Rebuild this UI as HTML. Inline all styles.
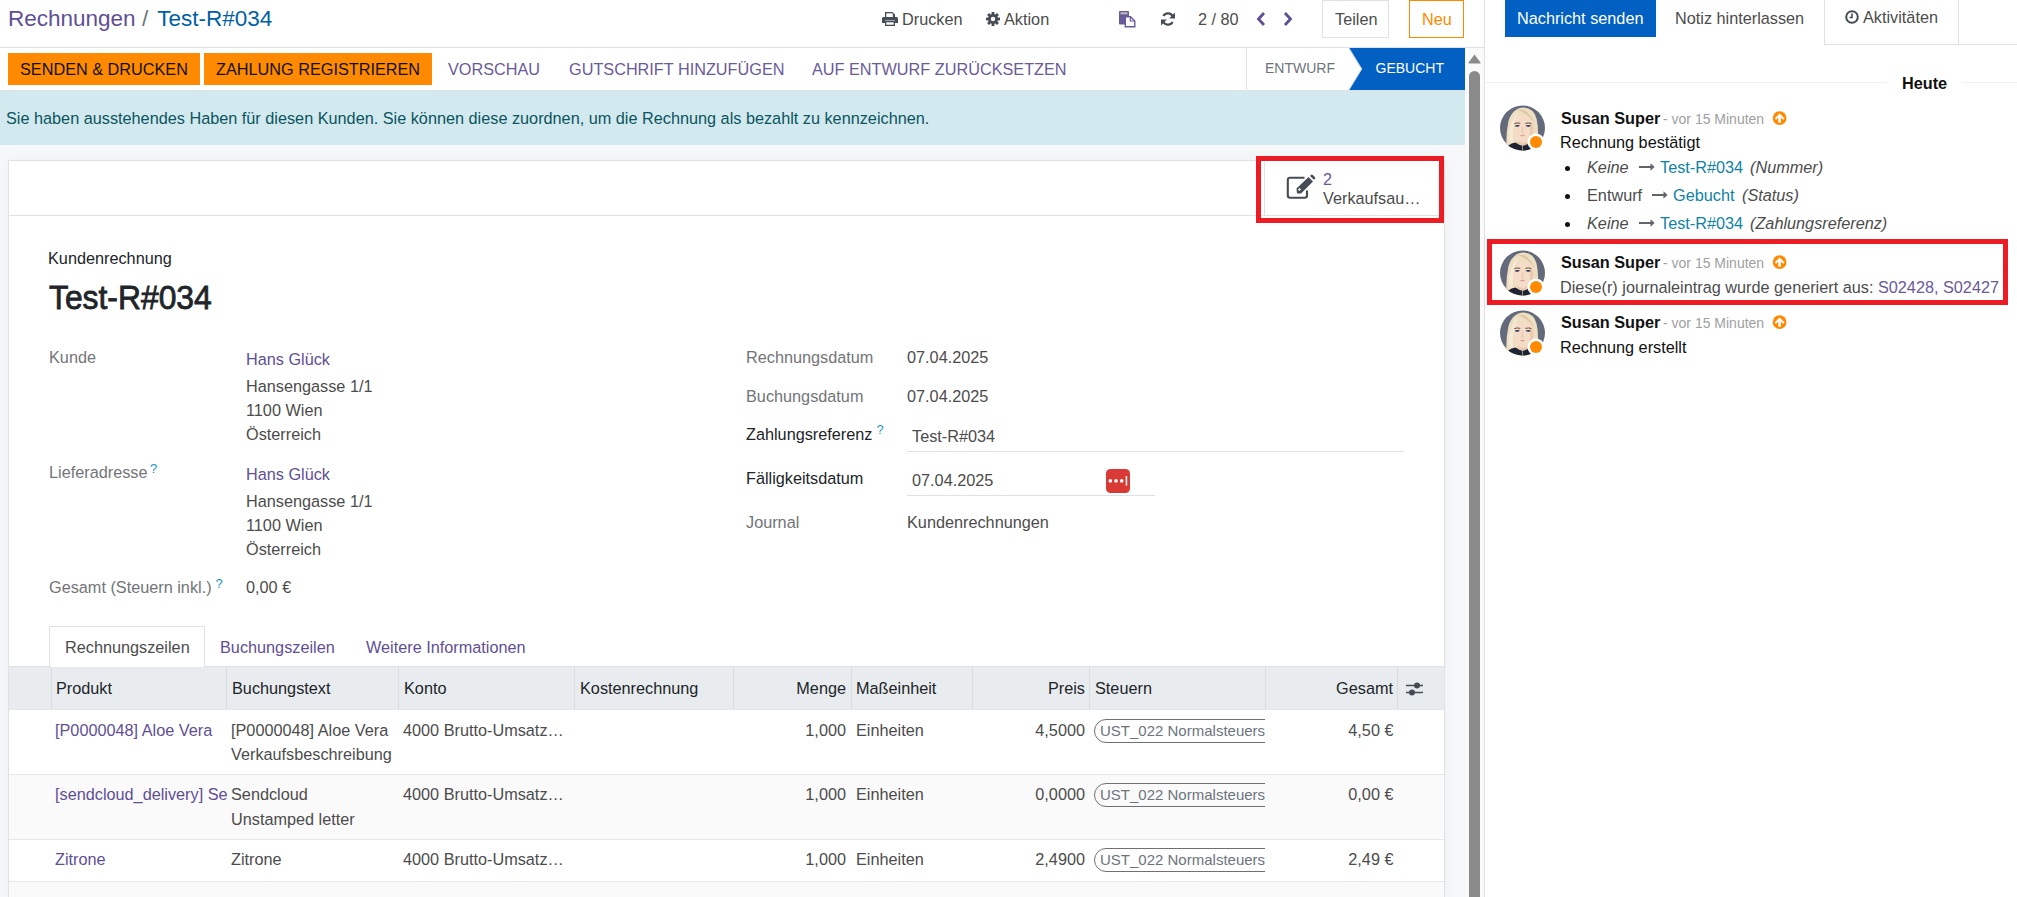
<!DOCTYPE html>
<html><head><meta charset="utf-8"><style>
html,body{margin:0;padding:0;width:2017px;height:897px;overflow:hidden;background:#fff;font-family:"Liberation Sans", sans-serif;}
.t{position:absolute;white-space:nowrap;line-height:1;}
.r{position:absolute;box-sizing:border-box;}
svg{position:absolute;overflow:visible;}
</style></head><body>
<div class="r" style="left:0px;top:145px;width:1465px;height:752px;background:#f7f8fa;"></div>
<div class="r" style="left:0px;top:47px;width:1484px;height:1px;background:#dee2e6;"></div>
<div class="r" style="left:0px;top:90px;width:1465px;height:1px;background:#dee2e6;"></div>
<div class="r" style="left:0px;top:91px;width:1465px;height:54px;background:#d2eaef;"></div>
<div class="r" style="left:8px;top:160px;width:1437px;height:737px;background:#fff;border:1px solid #dee2e6;border-bottom:none;box-shadow:0 0 18px rgba(0,0,0,0.045);"></div>
<div class="r" style="left:1465px;top:48px;width:19px;height:849px;background:#fafafa;"></div>
<div class="r" style="left:1469px;top:71px;width:11px;height:826px;background:#8a8a8a;border-radius:6px 6px 0 0;"></div>
<svg style="left:1468px;top:54px" width="13" height="10"><path d="M6.5 0.5 L12.5 8.5 Q13 9.5 12 9.5 L1 9.5 Q0 9.5 0.5 8.5 Z" fill="#8a8a8a"/></svg>
<div class="r" style="left:1484px;top:0px;width:1px;height:897px;background:#dee2e6;"></div>
<div class="t " style="left:8px;top:8px;font-size:22.5px;color:#5f4f95;">Rechnungen</div>
<div class="t " style="left:142px;top:8px;font-size:22.5px;color:#6c757d;">/</div>
<div class="t " style="left:157.3px;top:8px;font-size:22.5px;color:#005fa3;">Test-R#034</div>
<svg style="left:882px;top:12px" width="16" height="14" viewBox="0 0 16 14">
<path d="M3 0 H10.5 L13 2.5 V5 H3 Z" fill="#454c55"/>
<rect x="4.3" y="1.3" width="6.5" height="3.7" fill="#fff"/>
<path d="M1.5 5 H14.5 Q16 5 16 6.5 V11 H13 V8.5 H3 V11 H0 V6.5 Q0 5 1.5 5 Z" fill="#454c55"/>
<path d="M3 9 H13 V14 H3 Z" fill="#454c55"/><rect x="4.3" y="10.3" width="7.4" height="2.4" fill="#fff"/>
</svg>
<div class="t " style="left:902px;top:11px;font-size:16.25px;color:#4c4c4c;">Drucken</div>
<svg style="left:986px;top:12px" width="14" height="14" viewBox="0 0 14 14">
<g fill="#454c55"><circle cx="7" cy="7" r="5"/>
<rect x="5.6" y="0" width="2.8" height="14"/><rect x="0" y="5.6" width="14" height="2.8"/>
<rect x="5.6" y="0" width="2.8" height="14" transform="rotate(45 7 7)"/><rect x="0" y="5.6" width="14" height="2.8" transform="rotate(45 7 7)"/></g>
<circle cx="7" cy="7" r="2.2" fill="#fff"/></svg>
<div class="t " style="left:1004px;top:11px;font-size:16.25px;color:#4c4c4c;">Aktion</div>
<svg style="left:1119px;top:11px" width="17" height="16" viewBox="0 0 17 16">
<rect x="0" y="0" width="10" height="13.5" rx="0.8" fill="#6a5a9a"/>
<rect x="1.5" y="1.3" width="7" height="2" fill="#bfbfbf"/>
<path d="M6.3 5.8 H11.5 L15.8 10 V15.8 H6.3 Z" fill="#fff" stroke="#6a5a9a" stroke-width="1.4"/>
<path d="M11.3 5.8 V10 H15.8" fill="none" stroke="#6a5a9a" stroke-width="1.2"/>
</svg>
<svg style="left:1161px;top:12px" width="14" height="14" viewBox="0 0 14 14">
<path d="M12.2 5.2 A5.4 5.4 0 0 0 2.4 4" fill="none" stroke="#454c55" stroke-width="2.2"/>
<path d="M14 0.5 V6.4 H8.2 Z" fill="#454c55"/>
<path d="M1.8 8.8 A5.4 5.4 0 0 0 11.6 10" fill="none" stroke="#454c55" stroke-width="2.2"/>
<path d="M0 13.5 V7.6 H5.8 Z" fill="#454c55"/>
</svg>
<div class="t " style="left:1198px;top:11px;font-size:16.25px;color:#4c4c4c;">2 / 80</div>
<svg style="left:1256px;top:12px" width="10" height="14" viewBox="0 0 10 14"><path d="M8 1 L2.5 7 L8 13" fill="none" stroke="#5f4f95" stroke-width="2.8" stroke-linejoin="miter"/></svg>
<svg style="left:1283px;top:12px" width="10" height="14" viewBox="0 0 10 14"><path d="M2 1 L7.5 7 L2 13" fill="none" stroke="#5f4f95" stroke-width="2.8"/></svg>
<div class="r" style="left:1322px;top:0px;width:67px;height:38px;background:#fff;border:1px solid #dee2e6;"></div>
<div class="t " style="left:1335px;top:11px;font-size:16.25px;color:#4c4c4c;">Teilen</div>
<div class="r" style="left:1409px;top:0px;width:55px;height:38px;background:#fff;border:1.3px solid #ff8a00;"></div>
<div class="t " style="left:1422px;top:11px;font-size:16.25px;color:#ff8a00;">Neu</div>
<div class="r" style="left:8px;top:53px;width:192px;height:32px;background:#ff8a00;"></div>
<div class="t " style="left:20px;top:61px;font-size:16.25px;color:#111;">SENDEN &amp; DRUCKEN</div>
<div class="r" style="left:204px;top:53px;width:228px;height:32px;background:#ff8a00;"></div>
<div class="t " style="left:216px;top:61px;font-size:16.25px;color:#111;">ZAHLUNG REGISTRIEREN</div>
<div class="t " style="left:448px;top:61px;font-size:16.25px;color:#6a5a9a;">VORSCHAU</div>
<div class="t " style="left:569px;top:61px;font-size:16.25px;color:#6a5a9a;">GUTSCHRIFT HINZUFÜGEN</div>
<div class="t " style="left:812px;top:61px;font-size:16.25px;color:#6a5a9a;">AUF ENTWURF ZURÜCKSETZEN</div>
<div class="r" style="left:1246px;top:48px;width:1px;height:42px;background:#dee2e6;"></div>
<svg style="left:1347px;top:48px" width="118" height="42" viewBox="0 0 118 42">
<rect x="0.5" y="0" width="117.5" height="42" fill="#0160c2"/>
<path d="M0 0 H1.8 L14.6 21 L1.8 42 H0 Z" fill="#fff"/>
<path d="M1.8 0 L14.6 21 L1.8 42" fill="none" stroke="#d5d9de" stroke-width="1.1"/>
</svg>
<div class="t " style="left:1265px;top:61px;font-size:14px;color:#6c757d;">ENTWURF</div>
<div class="t " style="left:1375.5px;top:61px;font-size:14px;color:#fff;">GEBUCHT</div>
<div class="t " style="left:6px;top:110px;font-size:16.25px;color:#0c5460;">Sie haben ausstehendes Haben für diesen Kunden. Sie können diese zuordnen, um die Rechnung als bezahlt zu kennzeichnen.</div>
<div class="r" style="left:9px;top:215px;width:1435px;height:1px;background:#dee2e6;"></div>
<div class="r" style="left:1264px;top:161px;width:1px;height:54px;background:#dee2e6;"></div>
<svg style="left:1286px;top:176px" width="30" height="24" viewBox="0 0 30 24">
<path d="M18.5 1.8 H4 Q1.8 1.8 1.8 4 V19.5 Q1.8 21.7 4 21.7 H18.8 Q21 21.7 21 19.5 V14.5" fill="none" stroke="#454c55" stroke-width="2.1"/>
<path d="M11 17.5 L10.5 12.5 L22.5 1 L27 5.5 L15 17.5 Z" fill="#454c55"/>
<path d="M24 0 L25.2 -1.2 Q26 -1.8 26.8 -1 L29 1.2 Q29.6 2 29 2.7 L28 3.8 Z" fill="#454c55"/>
<path d="M12 13.5 L13.5 12 L15 13.5 L13.5 15 Z" fill="#fff"/>
</svg>
<div class="t " style="left:1323px;top:171px;font-size:16.25px;color:#6a5a9a;">2</div>
<div class="t " style="left:1323px;top:190px;font-size:16.25px;color:#4c4c4c;">Verkaufsau…</div>
<div class="t " style="left:48px;top:250px;font-size:16.25px;color:#212529;">Kundenrechnung</div>
<div class="t " style="left:48.5px;top:281px;font-size:33.5px;color:#212529;transform:scaleX(0.95);transform-origin:0 0;-webkit-text-stroke:0.8px #212529;">Test-R#034</div>
<div class="t " style="left:49px;top:349px;font-size:16.25px;color:#727578;">Kunde</div>
<div class="t " style="left:246px;top:351px;font-size:16.25px;color:#5f4f95;">Hans Glück</div>
<div class="t " style="left:246px;top:378px;font-size:16.25px;color:#4c4c4c;">Hansengasse 1/1</div>
<div class="t " style="left:246px;top:402px;font-size:16.25px;color:#4c4c4c;">1100 Wien</div>
<div class="t " style="left:246px;top:426px;font-size:16.25px;color:#4c4c4c;">Österreich</div>
<div class="t " style="left:49px;top:464px;font-size:16.25px;color:#727578;">Lieferadresse</div>
<div class="t " style="left:150px;top:462px;font-size:13px;color:#2196c4;">?</div>
<div class="t " style="left:246px;top:466px;font-size:16.25px;color:#5f4f95;">Hans Glück</div>
<div class="t " style="left:246px;top:493px;font-size:16.25px;color:#4c4c4c;">Hansengasse 1/1</div>
<div class="t " style="left:246px;top:517px;font-size:16.25px;color:#4c4c4c;">1100 Wien</div>
<div class="t " style="left:246px;top:541px;font-size:16.25px;color:#4c4c4c;">Österreich</div>
<div class="t " style="left:49px;top:579px;font-size:16.25px;color:#727578;">Gesamt (Steuern inkl.)</div>
<div class="t " style="left:215.5px;top:577px;font-size:13px;color:#2196c4;">?</div>
<div class="t " style="left:246px;top:579px;font-size:16.25px;color:#4c4c4c;">0,00 €</div>
<div class="t " style="left:746px;top:349px;font-size:16.25px;color:#727578;">Rechnungsdatum</div>
<div class="t " style="left:907px;top:349px;font-size:16.25px;color:#4c4c4c;">07.04.2025</div>
<div class="t " style="left:746px;top:388px;font-size:16.25px;color:#727578;">Buchungsdatum</div>
<div class="t " style="left:907px;top:388px;font-size:16.25px;color:#4c4c4c;">07.04.2025</div>
<div class="t " style="left:746px;top:426px;font-size:16.25px;color:#212529;">Zahlungsreferenz</div>
<div class="t " style="left:876.5px;top:423px;font-size:13px;color:#2196c4;">?</div>
<div class="t " style="left:912px;top:428px;font-size:16.25px;color:#4c4c4c;">Test-R#034</div>
<div class="r" style="left:907px;top:451px;width:497px;height:1px;background:#dee2e6;"></div>
<div class="t " style="left:746px;top:470px;font-size:16.25px;color:#212529;">Fälligkeitsdatum</div>
<div class="t " style="left:912px;top:472px;font-size:16.25px;color:#4c4c4c;">07.04.2025</div>
<div class="r" style="left:907px;top:495px;width:248px;height:1px;background:#dee2e6;"></div>
<svg style="left:1106px;top:469px" width="24" height="24" viewBox="0 0 24 24">
<rect width="24" height="24" rx="4.5" fill="#d93a36"/>
<circle cx="4.3" cy="11.9" r="1.8" fill="#fff"/><circle cx="10" cy="11.9" r="1.8" fill="#fff"/><circle cx="15.7" cy="11.9" r="1.8" fill="#fff"/>
<rect x="19.7" y="7" width="1.5" height="9.6" fill="#fff"/></svg>
<div class="t " style="left:746px;top:514px;font-size:16.25px;color:#727578;">Journal</div>
<div class="t " style="left:907px;top:514px;font-size:16.25px;color:#4c4c4c;">Kundenrechnungen</div>
<div class="r" style="left:9px;top:666px;width:1435px;height:1px;background:#dee2e6;"></div>
<div class="r" style="left:49px;top:626px;width:156px;height:41px;background:#fff;border:1px solid #dee2e6;border-bottom:none;"></div>
<div class="t " style="left:65px;top:639px;font-size:16.25px;color:#4c4c4c;">Rechnungszeilen</div>
<div class="t " style="left:220px;top:639px;font-size:16.25px;color:#5f4f95;">Buchungszeilen</div>
<div class="t " style="left:366px;top:639px;font-size:16.25px;color:#5f4f95;">Weitere Informationen</div>
<div class="r" style="left:9px;top:667px;width:1435px;height:43px;background:#e9ecef;border-bottom:1px solid #e3e6ea;"></div>
<div class="r" style="left:51px;top:667px;width:1px;height:42px;background:#d8dce0;"></div>
<div class="r" style="left:226px;top:667px;width:1px;height:42px;background:#d8dce0;"></div>
<div class="r" style="left:398px;top:667px;width:1px;height:42px;background:#d8dce0;"></div>
<div class="r" style="left:574px;top:667px;width:1px;height:42px;background:#d8dce0;"></div>
<div class="r" style="left:733px;top:667px;width:1px;height:42px;background:#d8dce0;"></div>
<div class="r" style="left:851px;top:667px;width:1px;height:42px;background:#d8dce0;"></div>
<div class="r" style="left:972px;top:667px;width:1px;height:42px;background:#d8dce0;"></div>
<div class="r" style="left:1089px;top:667px;width:1px;height:42px;background:#d8dce0;"></div>
<div class="r" style="left:1265px;top:667px;width:1px;height:42px;background:#d8dce0;"></div>
<div class="r" style="left:1397px;top:667px;width:1px;height:42px;background:#d8dce0;"></div>
<div class="t " style="left:56px;top:680px;font-size:16.25px;color:#212529;">Produkt</div>
<div class="t " style="left:232px;top:680px;font-size:16.25px;color:#212529;">Buchungstext</div>
<div class="t " style="left:404px;top:680px;font-size:16.25px;color:#212529;">Konto</div>
<div class="t " style="left:580px;top:680px;font-size:16.25px;color:#212529;">Kostenrechnung</div>
<div class="t " style="right:1171px;top:680px;font-size:16.25px;color:#212529;">Menge</div>
<div class="t " style="left:856px;top:680px;font-size:16.25px;color:#212529;">Maßeinheit</div>
<div class="t " style="right:932px;top:680px;font-size:16.25px;color:#212529;">Preis</div>
<div class="t " style="left:1095px;top:680px;font-size:16.25px;color:#212529;">Steuern</div>
<div class="t " style="right:624px;top:680px;font-size:16.25px;color:#212529;">Gesamt</div>
<svg style="left:1406px;top:682px" width="17" height="14" viewBox="0 0 17 14">
<path d="M0 3.5 H17 M0 10.5 H17" stroke="#454c55" stroke-width="1.6"/>
<circle cx="11" cy="3.5" r="3" fill="#454c55"/><circle cx="6" cy="10.5" r="3" fill="#454c55"/></svg>
<div class="r" style="left:9px;top:774px;width:1435px;height:1px;background:#e6e8eb;"></div>
<div class="r" style="left:9px;top:775px;width:1435px;height:64px;background:#fafafa;"></div>
<div class="r" style="left:9px;top:839px;width:1435px;height:1px;background:#e6e8eb;"></div>
<div class="r" style="left:9px;top:881px;width:1435px;height:1px;background:#e6e8eb;"></div>
<div class="r" style="left:9px;top:882px;width:1435px;height:15px;background:#fafafa;"></div>
<div class="t " style="left:55px;top:722px;font-size:16.25px;color:#5f4f95;">[P0000048] Aloe Vera</div>
<div class="t " style="left:231px;top:722px;font-size:16.25px;color:#4c4c4c;">[P0000048] Aloe Vera</div>
<div class="t " style="left:231px;top:746px;font-size:16.25px;color:#4c4c4c;">Verkaufsbeschreibung</div>
<div class="t " style="left:403px;top:722px;font-size:16.25px;color:#4c4c4c;">4000 Brutto-Umsatz…</div>
<div class="t " style="right:1171px;top:722px;font-size:16.25px;color:#4c4c4c;">1,000</div>
<div class="t " style="left:856px;top:722px;font-size:16.25px;color:#4c4c4c;">Einheiten</div>
<div class="t " style="right:932px;top:722px;font-size:16.25px;color:#4c4c4c;">4,5000</div>
<div class="r" style="left:1094px;top:719px;width:171px;height:24px;overflow:hidden"><div class="r" style="left:0;top:0;width:200px;height:24px;border:1.3px solid #707070;border-radius:12px"></div><div class="t" style="left:6px;top:4px;font-size:15px;color:#6c757d;line-height:1">UST_022 Normalsteuersatz</div></div>
<div class="t " style="right:623.5px;top:722px;font-size:16.25px;color:#4c4c4c;">4,50 €</div>
<div class="t " style="left:55px;top:786px;font-size:16.25px;color:#5f4f95;">[sendcloud_delivery] Se</div>
<div class="t " style="left:231px;top:786px;font-size:16.25px;color:#4c4c4c;">Sendcloud</div>
<div class="t " style="left:231px;top:811px;font-size:16.25px;color:#4c4c4c;">Unstamped letter</div>
<div class="t " style="left:403px;top:786px;font-size:16.25px;color:#4c4c4c;">4000 Brutto-Umsatz…</div>
<div class="t " style="right:1171px;top:786px;font-size:16.25px;color:#4c4c4c;">1,000</div>
<div class="t " style="left:856px;top:786px;font-size:16.25px;color:#4c4c4c;">Einheiten</div>
<div class="t " style="right:932px;top:786px;font-size:16.25px;color:#4c4c4c;">0,0000</div>
<div class="r" style="left:1094px;top:783px;width:171px;height:24px;overflow:hidden"><div class="r" style="left:0;top:0;width:200px;height:24px;border:1.3px solid #707070;border-radius:12px"></div><div class="t" style="left:6px;top:4px;font-size:15px;color:#6c757d;line-height:1">UST_022 Normalsteuersatz</div></div>
<div class="t " style="right:623.5px;top:786px;font-size:16.25px;color:#4c4c4c;">0,00 €</div>
<div class="t " style="left:55px;top:851px;font-size:16.25px;color:#5f4f95;">Zitrone</div>
<div class="t " style="left:231px;top:851px;font-size:16.25px;color:#4c4c4c;">Zitrone</div>
<div class="t " style="left:403px;top:851px;font-size:16.25px;color:#4c4c4c;">4000 Brutto-Umsatz…</div>
<div class="t " style="right:1171px;top:851px;font-size:16.25px;color:#4c4c4c;">1,000</div>
<div class="t " style="left:856px;top:851px;font-size:16.25px;color:#4c4c4c;">Einheiten</div>
<div class="t " style="right:932px;top:851px;font-size:16.25px;color:#4c4c4c;">2,4900</div>
<div class="r" style="left:1094px;top:848px;width:171px;height:24px;overflow:hidden"><div class="r" style="left:0;top:0;width:200px;height:24px;border:1.3px solid #707070;border-radius:12px"></div><div class="t" style="left:6px;top:4px;font-size:15px;color:#6c757d;line-height:1">UST_022 Normalsteuersatz</div></div>
<div class="t " style="right:623.5px;top:851px;font-size:16.25px;color:#4c4c4c;">2,49 €</div>
<div class="r" style="left:1265px;top:700px;width:132px;height:180px;background:transparent;"></div>
<div class="r" style="left:1256px;top:156px;width:188px;height:67px;background:transparent;border:5px solid #ed1c24;"></div>
<div class="r" style="left:1505px;top:0px;width:151px;height:37px;background:#0160c2;"></div>
<div class="t " style="left:1517px;top:10px;font-size:16.25px;color:#fff;">Nachricht senden</div>
<div class="t " style="left:1675px;top:10px;font-size:16.25px;color:#4c4c4c;">Notiz hinterlassen</div>
<div class="r" style="left:1824px;top:-1px;width:135px;height:46px;background:#fff;border:1px solid #dee2e6;border-bottom:none;"></div>
<div class="r" style="left:1824px;top:44px;width:193px;height:1px;background:#dee2e6;"></div>
<svg style="left:1845px;top:10px" width="14" height="14" viewBox="0 0 14 14">
<circle cx="7" cy="7" r="5.8" fill="none" stroke="#454c55" stroke-width="2"/>
<path d="M7 3.5 V7.5 H4.5" fill="none" stroke="#454c55" stroke-width="1.6"/></svg>
<div class="t " style="left:1863px;top:9px;font-size:16.25px;color:#4c4c4c;">Aktivitäten</div>
<div class="r" style="left:1486px;top:82px;width:401px;height:1px;background:#f0f1f3;"></div>
<div class="r" style="left:1962px;top:82px;width:55px;height:1px;background:#f0f1f3;"></div>
<div class="t " style="left:1902px;top:75px;font-size:16.25px;color:#111;font-weight:bold;">Heute</div>
<svg style="left:1500px;top:105px" width="46" height="46" viewBox="0 0 46 46">
<defs><clipPath id="c105"><circle cx="22.5" cy="23" r="22.5"/></clipPath></defs>
<g clip-path="url(#c105)">
<rect width="46" height="46" fill="#636a7b"/>
<path d="M6.5 46 Q5.5 30 8.5 16 Q12.5 3 23.5 2.5 Q33.5 3 36.5 13.5 Q39 23 37.5 40 L35 46 Z" fill="#eedfc2"/>
<path d="M13 22 Q13 14 19 12 Q26 10.5 30.5 13.5 Q33.5 16.5 33.5 23 Q33.5 31 29 35.5 Q25.5 38.5 22.5 38.5 Q19 38.5 16 35 Q13 31 13 22 Z" fill="#f5dcc7"/>
<path d="M29 16 Q33.5 18 33.5 24 Q33.5 31 29 35.5 Q31 28 29 16 Z" fill="#ecc9b1"/>
<path d="M17 5 Q27 7 35 19 Q31 9 24 5 Z" fill="#e0c7a3"/>
<path d="M8.5 32 Q10 15 19 6 Q13.5 16 13 28 L12.5 44 Z" fill="#f6ead6"/>
<path d="M14.3 18.6 Q17 17.4 20.3 18.4 M25.3 18.4 Q28.6 17.4 31.3 18.6" stroke="#5a4038" stroke-width="0.9" fill="none"/>
<path d="M14.5 21 Q17.2 19.2 20 20.8 Q17.2 22.4 14.5 21 Z M25.5 20.8 Q28.3 19.2 31 21 Q28.3 22.4 25.5 20.8 Z" fill="#1f2f57"/>
<path d="M22.8 22 L22 27.2 L23.6 27.4" stroke="#e0b49c" stroke-width="0.7" fill="none"/>
<path d="M19.8 30.4 Q22.5 29.2 25.2 30.4 Q22.5 32.2 19.8 30.4 Z" fill="#e39c94"/>
<path d="M17.5 36 Q22.5 39.5 27.5 36 L28 40 H17 Z" fill="#ecc8b0"/>
<path d="M4 46 Q7 39 15.5 37.5 Q19.5 40.5 22.5 40.8 Q26 40.5 29.5 37.5 Q38 39 41 46 Z" fill="#1d2331"/>
<path d="M22.5 41 V46" stroke="#b5afa5" stroke-width="0.8"/>
</g>
<circle cx="36" cy="37" r="8.6" fill="#fff"/><circle cx="36" cy="37" r="6" fill="#ff8a00"/>
</svg>
<div class="t " style="left:1561px;top:110px;font-size:16.25px;color:#111;font-weight:bold;">Susan Super</div>
<div class="t " style="left:1663px;top:112px;font-size:14px;color:#a0a0a0;">- vor 15 Minuten</div>
<svg style="left:1772px;top:111px" width="15" height="15" viewBox="0 0 15 15">
<circle cx="7.6" cy="7.1" r="6.9" fill="#ff8a00"/>
<path d="M7.6 2.4 L12.6 7.5 L11.1 8.8 L8.9 6.6 V11.8 H6.3 V6.6 L4.1 8.8 L2.6 7.5 Z" fill="#fff"/></svg>
<div class="t " style="left:1560px;top:134px;font-size:16.25px;color:#111;">Rechnung bestätigt</div>
<div class="r" style="left:1565px;top:166px;width:5px;height:5px;border-radius:50%;background:#111"></div>
<div class="t " style="left:1587px;top:159px;font-size:16.25px;color:#4c4c4c;font-style:italic;">Keine</div>
<svg style="left:1639px;top:163px" width="16" height="8" viewBox="0 0 16 8"><path d="M0 3 H11.5 V0.2 L15.6 4 L11.5 7.8 V5.1 H0 Z" fill="#5f656b"/></svg>
<div class="t " style="left:1660px;top:159px;font-size:16.25px;color:#0e83a6;">Test-R#034</div>
<div class="t " style="left:1750px;top:159px;font-size:16.25px;color:#4c4c4c;font-style:italic;">(Nummer)</div>
<div class="r" style="left:1565px;top:194px;width:5px;height:5px;border-radius:50%;background:#111"></div>
<div class="t " style="left:1587px;top:187px;font-size:16.25px;color:#4c4c4c;">Entwurf</div>
<svg style="left:1652px;top:191px" width="16" height="8" viewBox="0 0 16 8"><path d="M0 3 H11.5 V0.2 L15.6 4 L11.5 7.8 V5.1 H0 Z" fill="#5f656b"/></svg>
<div class="t " style="left:1673px;top:187px;font-size:16.25px;color:#0e83a6;">Gebucht</div>
<div class="t " style="left:1742px;top:187px;font-size:16.25px;color:#4c4c4c;font-style:italic;">(Status)</div>
<div class="r" style="left:1565px;top:222px;width:5px;height:5px;border-radius:50%;background:#111"></div>
<div class="t " style="left:1587px;top:215px;font-size:16.25px;color:#4c4c4c;font-style:italic;">Keine</div>
<svg style="left:1639px;top:219px" width="16" height="8" viewBox="0 0 16 8"><path d="M0 3 H11.5 V0.2 L15.6 4 L11.5 7.8 V5.1 H0 Z" fill="#5f656b"/></svg>
<div class="t " style="left:1660px;top:215px;font-size:16.25px;color:#0e83a6;">Test-R#034</div>
<div class="t " style="left:1750px;top:215px;font-size:16.25px;color:#4c4c4c;font-style:italic;">(Zahlungsreferenz)</div>
<svg style="left:1500px;top:250px" width="46" height="46" viewBox="0 0 46 46">
<defs><clipPath id="c250"><circle cx="22.5" cy="23" r="22.5"/></clipPath></defs>
<g clip-path="url(#c250)">
<rect width="46" height="46" fill="#636a7b"/>
<path d="M6.5 46 Q5.5 30 8.5 16 Q12.5 3 23.5 2.5 Q33.5 3 36.5 13.5 Q39 23 37.5 40 L35 46 Z" fill="#eedfc2"/>
<path d="M13 22 Q13 14 19 12 Q26 10.5 30.5 13.5 Q33.5 16.5 33.5 23 Q33.5 31 29 35.5 Q25.5 38.5 22.5 38.5 Q19 38.5 16 35 Q13 31 13 22 Z" fill="#f5dcc7"/>
<path d="M29 16 Q33.5 18 33.5 24 Q33.5 31 29 35.5 Q31 28 29 16 Z" fill="#ecc9b1"/>
<path d="M17 5 Q27 7 35 19 Q31 9 24 5 Z" fill="#e0c7a3"/>
<path d="M8.5 32 Q10 15 19 6 Q13.5 16 13 28 L12.5 44 Z" fill="#f6ead6"/>
<path d="M14.3 18.6 Q17 17.4 20.3 18.4 M25.3 18.4 Q28.6 17.4 31.3 18.6" stroke="#5a4038" stroke-width="0.9" fill="none"/>
<path d="M14.5 21 Q17.2 19.2 20 20.8 Q17.2 22.4 14.5 21 Z M25.5 20.8 Q28.3 19.2 31 21 Q28.3 22.4 25.5 20.8 Z" fill="#1f2f57"/>
<path d="M22.8 22 L22 27.2 L23.6 27.4" stroke="#e0b49c" stroke-width="0.7" fill="none"/>
<path d="M19.8 30.4 Q22.5 29.2 25.2 30.4 Q22.5 32.2 19.8 30.4 Z" fill="#e39c94"/>
<path d="M17.5 36 Q22.5 39.5 27.5 36 L28 40 H17 Z" fill="#ecc8b0"/>
<path d="M4 46 Q7 39 15.5 37.5 Q19.5 40.5 22.5 40.8 Q26 40.5 29.5 37.5 Q38 39 41 46 Z" fill="#1d2331"/>
<path d="M22.5 41 V46" stroke="#b5afa5" stroke-width="0.8"/>
</g>
<circle cx="36" cy="37" r="8.6" fill="#fff"/><circle cx="36" cy="37" r="6" fill="#ff8a00"/>
</svg>
<div class="t " style="left:1561px;top:254px;font-size:16.25px;color:#111;font-weight:bold;">Susan Super</div>
<div class="t " style="left:1663px;top:256px;font-size:14px;color:#a0a0a0;">- vor 15 Minuten</div>
<svg style="left:1772px;top:255px" width="15" height="15" viewBox="0 0 15 15">
<circle cx="7.6" cy="7.1" r="6.9" fill="#ff8a00"/>
<path d="M7.6 2.4 L12.6 7.5 L11.1 8.8 L8.9 6.6 V11.8 H6.3 V6.6 L4.1 8.8 L2.6 7.5 Z" fill="#fff"/></svg>
<div class="t " style="left:1560px;top:279px;font-size:16.25px;color:#4c4c4c;">Diese(r) journaleintrag wurde generiert aus: <span style="color:#6a5a9a">S02428, S02427</span></div>
<div class="r" style="left:1487px;top:239px;width:521px;height:66px;background:transparent;border:5px solid #ed1c24;"></div>
<svg style="left:1500px;top:310px" width="46" height="46" viewBox="0 0 46 46">
<defs><clipPath id="c310"><circle cx="22.5" cy="23" r="22.5"/></clipPath></defs>
<g clip-path="url(#c310)">
<rect width="46" height="46" fill="#636a7b"/>
<path d="M6.5 46 Q5.5 30 8.5 16 Q12.5 3 23.5 2.5 Q33.5 3 36.5 13.5 Q39 23 37.5 40 L35 46 Z" fill="#eedfc2"/>
<path d="M13 22 Q13 14 19 12 Q26 10.5 30.5 13.5 Q33.5 16.5 33.5 23 Q33.5 31 29 35.5 Q25.5 38.5 22.5 38.5 Q19 38.5 16 35 Q13 31 13 22 Z" fill="#f5dcc7"/>
<path d="M29 16 Q33.5 18 33.5 24 Q33.5 31 29 35.5 Q31 28 29 16 Z" fill="#ecc9b1"/>
<path d="M17 5 Q27 7 35 19 Q31 9 24 5 Z" fill="#e0c7a3"/>
<path d="M8.5 32 Q10 15 19 6 Q13.5 16 13 28 L12.5 44 Z" fill="#f6ead6"/>
<path d="M14.3 18.6 Q17 17.4 20.3 18.4 M25.3 18.4 Q28.6 17.4 31.3 18.6" stroke="#5a4038" stroke-width="0.9" fill="none"/>
<path d="M14.5 21 Q17.2 19.2 20 20.8 Q17.2 22.4 14.5 21 Z M25.5 20.8 Q28.3 19.2 31 21 Q28.3 22.4 25.5 20.8 Z" fill="#1f2f57"/>
<path d="M22.8 22 L22 27.2 L23.6 27.4" stroke="#e0b49c" stroke-width="0.7" fill="none"/>
<path d="M19.8 30.4 Q22.5 29.2 25.2 30.4 Q22.5 32.2 19.8 30.4 Z" fill="#e39c94"/>
<path d="M17.5 36 Q22.5 39.5 27.5 36 L28 40 H17 Z" fill="#ecc8b0"/>
<path d="M4 46 Q7 39 15.5 37.5 Q19.5 40.5 22.5 40.8 Q26 40.5 29.5 37.5 Q38 39 41 46 Z" fill="#1d2331"/>
<path d="M22.5 41 V46" stroke="#b5afa5" stroke-width="0.8"/>
</g>
<circle cx="36" cy="37" r="8.6" fill="#fff"/><circle cx="36" cy="37" r="6" fill="#ff8a00"/>
</svg>
<div class="t " style="left:1561px;top:314px;font-size:16.25px;color:#111;font-weight:bold;">Susan Super</div>
<div class="t " style="left:1663px;top:316px;font-size:14px;color:#a0a0a0;">- vor 15 Minuten</div>
<svg style="left:1772px;top:315px" width="15" height="15" viewBox="0 0 15 15">
<circle cx="7.6" cy="7.1" r="6.9" fill="#ff8a00"/>
<path d="M7.6 2.4 L12.6 7.5 L11.1 8.8 L8.9 6.6 V11.8 H6.3 V6.6 L4.1 8.8 L2.6 7.5 Z" fill="#fff"/></svg>
<div class="t " style="left:1560px;top:339px;font-size:16.25px;color:#111;">Rechnung erstellt</div>
</body></html>
